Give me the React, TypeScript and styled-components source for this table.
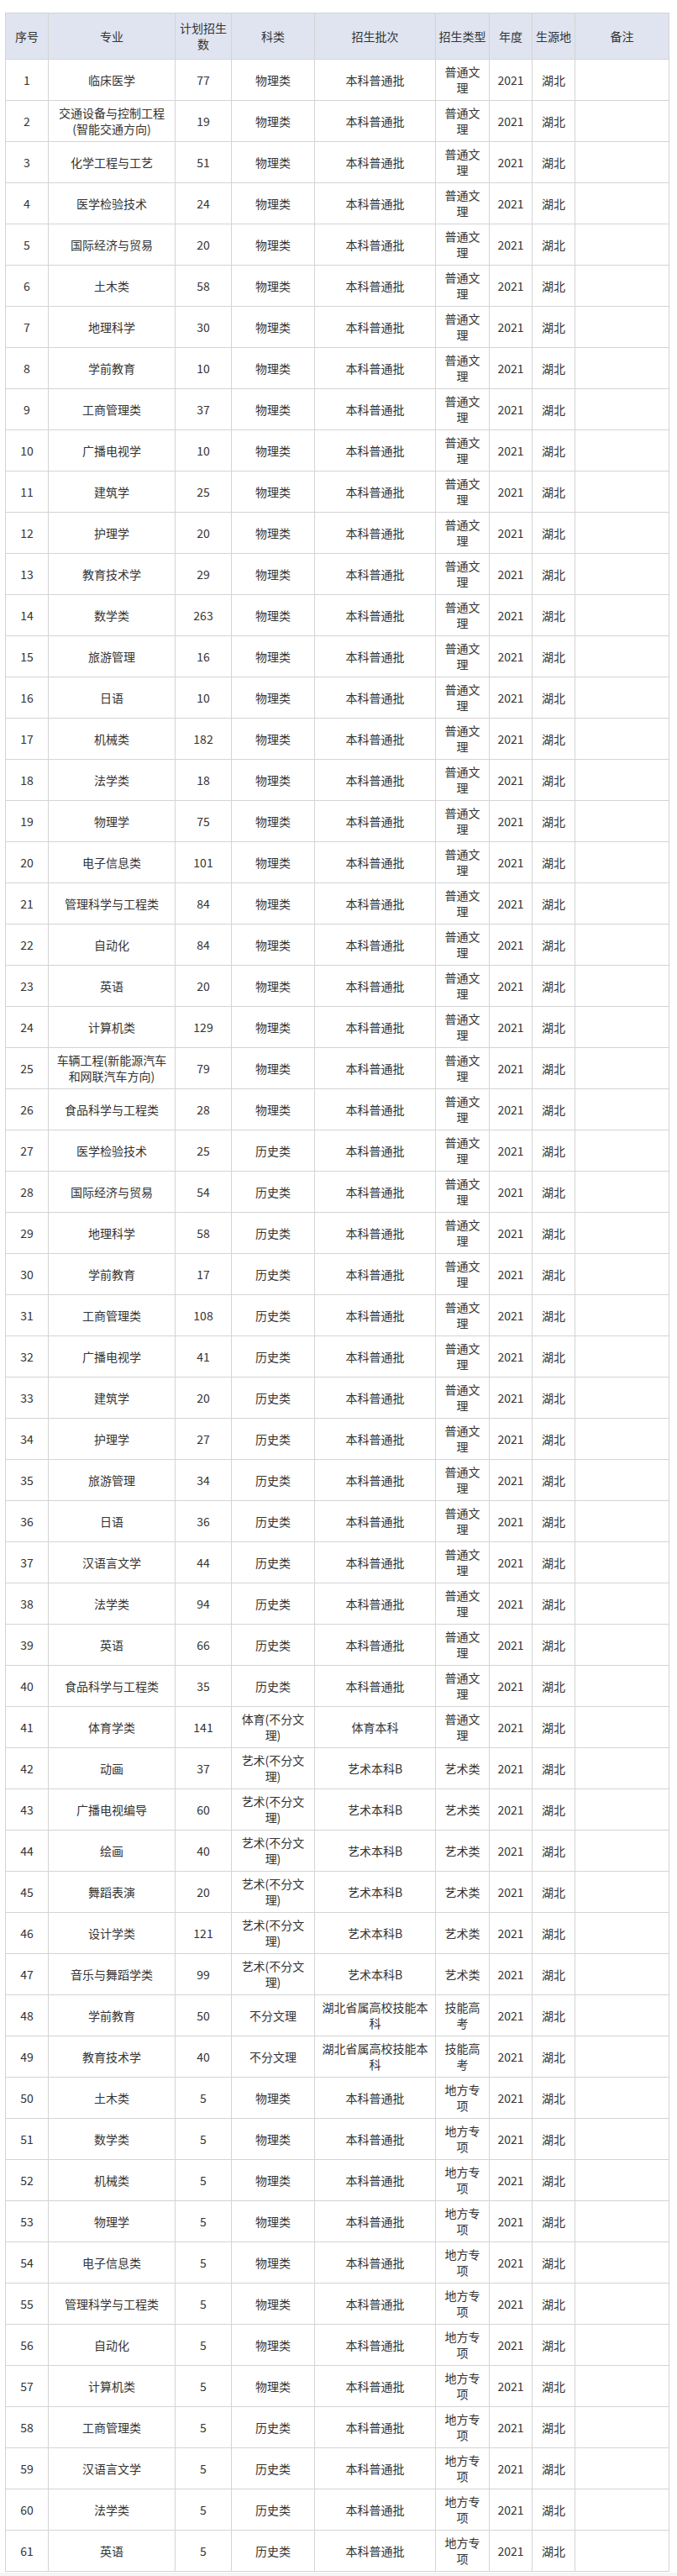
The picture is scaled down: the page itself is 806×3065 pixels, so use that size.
import React from 'react';
import styled, { createGlobalStyle } from 'styled-components';

type Row = [string, number, string, string, string];

const GlobalStyle = createGlobalStyle`
  html, body {
    margin: 0;
    padding: 0;
    background: #f5f5f5;
  }
  body {
    font-family: "Microsoft YaHei", "Noto Sans CJK SC", "Noto Sans", sans-serif;
    color: #333;
  }
`;

const Page = styled.div`
  background: #fff;
  padding: 15px 10px 1px 6px;
`;

const Table = styled.table`
  width: 790px;
  border-collapse: collapse;
  table-layout: fixed;
  font-size: 14px;
  line-height: 19px;
`;

const Col = styled.col<{ $w: number }>`
  width: ${(p) => p.$w}px;
`;

const HeadCell = styled.th`
  box-sizing: border-box;
  background: #dfe4f0;
  border: 1px solid #d4d4d4;
  padding: 8px 2px;
  font-weight: normal;
  text-align: center;
  vertical-align: middle;
  color: #333;
`;

const Cell = styled.td`
  box-sizing: border-box;
  border: 1px solid #d4d4d4;
  padding: 5px 4px;
  height: 49px;
  text-align: center;
  vertical-align: middle;
  color: #333;
`;

const Footer = styled.div`
  height: 5px;
  background: #f5f5f5;
`;

const columns: [string, number][] = [
  ['序号', 51],
  ['专业', 151],
  ['计划招生数', 67],
  ['科类', 99],
  ['招生批次', 144],
  ['招生类型', 64],
  ['年度', 51],
  ['生源地', 51],
  ['备注', 112],
];

const W = '物理类';
const L = '历史类';
const P = '本科普通批';
const G = '普通文理';
const D = '地方专项';
const A = '艺术(不分文理)';
const AB = '艺术本科B';

const rows: Row[] = [
  ['临床医学', 77, W, P, G],
  ['交通设备与控制工程(智能交通方向)', 19, W, P, G],
  ['化学工程与工艺', 51, W, P, G],
  ['医学检验技术', 24, W, P, G],
  ['国际经济与贸易', 20, W, P, G],
  ['土木类', 58, W, P, G],
  ['地理科学', 30, W, P, G],
  ['学前教育', 10, W, P, G],
  ['工商管理类', 37, W, P, G],
  ['广播电视学', 10, W, P, G],
  ['建筑学', 25, W, P, G],
  ['护理学', 20, W, P, G],
  ['教育技术学', 29, W, P, G],
  ['数学类', 263, W, P, G],
  ['旅游管理', 16, W, P, G],
  ['日语', 10, W, P, G],
  ['机械类', 182, W, P, G],
  ['法学类', 18, W, P, G],
  ['物理学', 75, W, P, G],
  ['电子信息类', 101, W, P, G],
  ['管理科学与工程类', 84, W, P, G],
  ['自动化', 84, W, P, G],
  ['英语', 20, W, P, G],
  ['计算机类', 129, W, P, G],
  ['车辆工程(新能源汽车和网联汽车方向)', 79, W, P, G],
  ['食品科学与工程类', 28, W, P, G],
  ['医学检验技术', 25, L, P, G],
  ['国际经济与贸易', 54, L, P, G],
  ['地理科学', 58, L, P, G],
  ['学前教育', 17, L, P, G],
  ['工商管理类', 108, L, P, G],
  ['广播电视学', 41, L, P, G],
  ['建筑学', 20, L, P, G],
  ['护理学', 27, L, P, G],
  ['旅游管理', 34, L, P, G],
  ['日语', 36, L, P, G],
  ['汉语言文学', 44, L, P, G],
  ['法学类', 94, L, P, G],
  ['英语', 66, L, P, G],
  ['食品科学与工程类', 35, L, P, G],
  ['体育学类', 141, '体育(不分文理)', '体育本科', G],
  ['动画', 37, A, AB, '艺术类'],
  ['广播电视编导', 60, A, AB, '艺术类'],
  ['绘画', 40, A, AB, '艺术类'],
  ['舞蹈表演', 20, A, AB, '艺术类'],
  ['设计学类', 121, A, AB, '艺术类'],
  ['音乐与舞蹈学类', 99, A, AB, '艺术类'],
  ['学前教育', 50, '不分文理', '湖北省属高校技能本科', '技能高考'],
  ['教育技术学', 40, '不分文理', '湖北省属高校技能本科', '技能高考'],
  ['土木类', 5, W, P, D],
  ['数学类', 5, W, P, D],
  ['机械类', 5, W, P, D],
  ['物理学', 5, W, P, D],
  ['电子信息类', 5, W, P, D],
  ['管理科学与工程类', 5, W, P, D],
  ['自动化', 5, W, P, D],
  ['计算机类', 5, W, P, D],
  ['工商管理类', 5, L, P, D],
  ['汉语言文学', 5, L, P, D],
  ['法学类', 5, L, P, D],
  ['英语', 5, L, P, D],
];

export default function App() {
  return (
    <>
      <GlobalStyle />
      <Page>
        <Table>
          <colgroup>
            {columns.map(([label, w]) => (
              <Col key={label} $w={w} />
            ))}
          </colgroup>
          <thead>
            <tr>
              {columns.map(([label]) => (
                <HeadCell key={label}>{label}</HeadCell>
              ))}
            </tr>
          </thead>
          <tbody>
            {rows.map(([major, count, kind, batch, type], i) => (
              <tr key={i}>
                <Cell>{i + 1}</Cell>
                <Cell>{major}</Cell>
                <Cell>{count}</Cell>
                <Cell>{kind}</Cell>
                <Cell>{batch}</Cell>
                <Cell>{type}</Cell>
                <Cell>2021</Cell>
                <Cell>湖北</Cell>
                <Cell></Cell>
              </tr>
            ))}
          </tbody>
        </Table>
      </Page>
      <Footer />
    </>
  );
}
